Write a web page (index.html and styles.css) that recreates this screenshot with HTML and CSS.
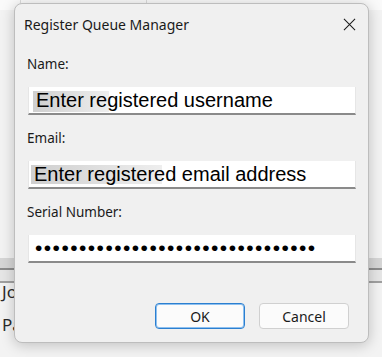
FILE: index.html
```html
<!DOCTYPE html>
<html lang="en">
<head>
    <meta charset="UTF-8">
    <meta name="viewport" content="width=device-width, initial-scale=1.0">
    <title>Register Queue Manager</title>
    <link rel="stylesheet" href="styles.css">
</head>
<body>
    <div class="app">
        <div class="app-header">
            <div class="app-col app-col-first"></div>
            <div class="app-col app-col-mid"></div>
            <div class="app-col"></div>
        </div>
        <div class="app-toolbar">
            <div class="app-band"></div>
            <div class="app-band app-band-low"></div>
        </div>
        <div class="app-row">Jobs</div>
        <div class="app-row">Paused</div>
    </div>

    <div class="dialog">
        <div class="dialog-title">
            <span>Register Queue Manager</span>
            <svg class="dialog-close" width="14" height="14" viewBox="0 0 14 14">
                <path d="M1 1 L13 13 M13 1 L1 13" stroke="#1a1a1a" stroke-width="1.1" fill="none"/>
            </svg>
        </div>
        <div class="dialog-body">
            <div class="field-label">Name:</div>
            <div class="field-input field-name">Enter registered username</div>
            <div class="field-label">Email:</div>
            <div class="field-input field-email">Enter registered email address</div>
            <div class="field-label">Serial Number:</div>
            <div class="field-input field-serial">&#8226;&#8226;&#8226;&#8226;&#8226;&#8226;&#8226;&#8226;&#8226;&#8226;&#8226;&#8226;&#8226;&#8226;&#8226;&#8226;&#8226;&#8226;&#8226;&#8226;&#8226;&#8226;&#8226;&#8226;&#8226;&#8226;&#8226;&#8226;&#8226;&#8226;&#8226;&#8226;</div>
        </div>
        <div class="dialog-actions">
            <button class="btn btn-primary">OK</button>
            <button class="btn">Cancel</button>
        </div>
    </div>
</body>
</html>
```

FILE: styles.css
```css
body {
    margin: 0;
    width: 382px;
    height: 357px;
    background-color: #f3f3f3;
    font-family: 'Noto Sans', 'Open Sans', sans-serif;
    color: #1a1a1a;
    position: relative;
    overflow: hidden;
}
.app {
    display: flex;
    flex-direction: column;
    height: 100%;
}
.app-header {
    display: flex;
    height: 10px;
    background: #fafafa;
}
.app-col {
    flex: 1;
    border-left: 1px solid #dcdcdc;
}
.app-col-first {
    flex: 0 0 20px;
    border-left: none;
}
.app-col-mid {
    flex: 0 0 125px;
}
.app-toolbar {
    margin-top: 248px;
    display: flex;
    flex-direction: column;
}
.app-band {
    height: 10px;
    background: #d6d6d6;
    border-bottom: 2px solid #8c8c8c;
}
.app-band-low {
    height: 11px;
    background: #e6e6e6;
    border-bottom: 2px solid #a0a0a0;
}
.app-row {
    padding-left: 2px;
    font-size: 17px;
    line-height: 20px;
    color: #2a2a2a;
    margin-top: -1px;
}
.app-row + .app-row {
    margin-top: 13px;
}

.dialog {
    position: absolute;
    left: 14px;
    top: 3px;
    width: 353px;
    height: 338px;
    background: #f0f0f0;
    border: 1px solid #bdbdbd;
    border-radius: 8px;
    box-shadow: 0 2px 14px rgba(0, 0, 0, 0.22);
    display: flex;
    flex-direction: column;
}
.dialog-title {
    display: flex;
    justify-content: space-between;
    align-items: center;
    height: 40px;
    padding: 0 12px 0 9px;
    font-size: 14px;
}
.dialog-close {
    width: 13px;
    height: 13px;
    margin-top: 1px;
}
.dialog-body {
    display: flex;
    flex-direction: column;
    padding: 0 12px 0 12px;
}
.field-label {
    font-size: 13.5px;
    line-height: 16px;
    margin-top: 15px;
}
.field-label:first-child {
    margin-top: 12px;
}
.field-input {
    margin: 15px 0 0 1px;
    height: 26px;
    background: #ffffff;
    border: 1px solid #e6e6e6;
    border-bottom: 2px solid #8a8a8a;
    border-top: none;
    font-family: 'Liberation Sans', Arial, sans-serif;
    font-size: 20px;
    line-height: 26px;
    color: #000000;
    padding-left: 7px;
    box-sizing: content-box;
}
.field-name {
    background: linear-gradient(to right, #cfcfcf, #eeeeee) no-repeat 4px 4px / 76px 21px, #ffffff;
}
.field-email {
    padding-left: 5px;
    background: linear-gradient(to right, #cfcfcf, #eeeeee) no-repeat 2px 4px / 131px 19px, #ffffff;
}
.field-serial {
    font-size: 21px;
    letter-spacing: 1.45px;
    padding-left: 6px;
}
.dialog-actions {
    display: flex;
    justify-content: flex-end;
    gap: 14px;
    margin-top: 40px;
    padding-right: 19px;
}
.btn {
    width: 90px;
    height: 26px;
    background: #fbfbfb;
    border: 1px solid #d0d0d0;
    border-radius: 4px;
    font-family: 'Noto Sans', sans-serif;
    font-size: 14px;
    color: #1a1a1a;
    padding: 0;
}
.btn-primary {
    border: 1px solid #2b7fd0;
    box-shadow: inset 0 0 0 1px #8ec0ef;
}
```
